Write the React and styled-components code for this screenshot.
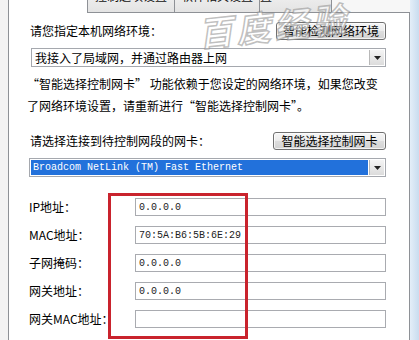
import styled, { createGlobalStyle } from 'styled-components';

const GlobalStyle = createGlobalStyle`
  html, body {
    margin: 0;
    padding: 0;
    background: #ffffff;
  }
  body {
    font-family: "Noto Sans CJK SC", "Liberation Sans", sans-serif;
    font-size: 12px;
    color: #000;
  }
`;

const CJK = '"Noto Sans CJK SC", "Liberation Sans", sans-serif';
const MONO = '"Liberation Mono", "Noto Sans CJK SC", monospace';

const tabs = [
  { label: '网络环境设置', width: 80, active: true },
  { label: '控制选项设置', width: 88 },
  { label: '软件相关设置', width: 86 },
  { label: '软件界面设置', width: 73 },
];

const fields = [
  { label: 'IP地址：', value: '0.0.0.0' },
  { label: 'MAC地址：', value: '70:5A:B6:5B:6E:29' },
  { label: '子网掩码：', value: '0.0.0.0' },
  { label: '网关地址：', value: '0.0.0.0' },
  { label: '网关MAC地址：', value: '' },
];

const Arrow = () => (
  <svg width="7" height="4" viewBox="0 0 7 4">
    <path d="M0 0h7L3.5 4z" fill="#222" />
  </svg>
);

const App = () => {
  return (
    <>
      <GlobalStyle />
      <Window>
        <LeftFrame />
        <Main>
          <TabBar>
            {tabs.map((t) => (
              <Tab key={t.label} $active={t.active} $width={t.width}>
                {t.label}
              </Tab>
            ))}
          </TabBar>
          <Content>
            <Row>
              <Label>请您指定本机网络环境：</Label>
              <Button $width={110}>智能检测网络环境</Button>
            </Row>
            <Combo $left={2}>
              <ComboText>我接入了局域网，并通过路由器上网</ComboText>
              <DropButton>
                <Arrow />
              </DropButton>
            </Combo>
            <Paragraph>
              “智能选择控制网卡” 功能依赖于您设定的网络环境，如果您改变
              <br />
              了网络环境设置，请重新进行“智能选择控制网卡”。
            </Paragraph>
            <Row $top={15}>
              <Label>请选择连接到待控制网段的网卡：</Label>
              <Button $width={113}>智能选择控制网卡</Button>
            </Row>
            <Combo>
              <ComboText $selected>Broadcom NetLink (TM) Fast Ethernet</ComboText>
              <DropButton>
                <Arrow />
              </DropButton>
            </Combo>
            <Fields>
              {fields.map((f) => (
                <FieldRow key={f.label}>
                  <FieldLabel>{f.label}</FieldLabel>
                  <Input>{f.value}</Input>
                </FieldRow>
              ))}
            </Fields>
          </Content>
        </Main>
        <RightFrame />
        <Highlight />
        <Watermark>百度经验</Watermark>
      </Window>
    </>
  );
};

const Window = styled.div`
  position: relative;
  width: 419px;
  height: 340px;
  overflow: hidden;
  display: flex;
  background: #f4f4f4;
`;

const LeftFrame = styled.div`
  width: 8px;
  background: #f3f3f3;
`;

const RightFrame = styled.div`
  width: 9px;
  background: linear-gradient(90deg, #e4eef8, #c9dcef);
`;

const Main = styled.div`
  flex: 1;
  display: flex;
  flex-direction: column;
  min-width: 0;
`;

const TabBar = styled.div`
  height: 13px;
  display: flex;
  align-items: flex-end;
  overflow: hidden;
  background: #f7f7f7;
`;

const Tab = styled.div`
  flex: none;
  width: ${({ $width }) => $width}px;
  height: ${({ $active }) => ($active ? 26 : 24)}px;
  box-sizing: border-box;
  padding-bottom: ${({ $active }) => ($active ? 14 : 10)}px;
  display: flex;
  align-items: flex-end;
  justify-content: center;
  font-family: ${CJK};
  font-size: 12px;
  line-height: 14px;
  color: #111;
  border: 1px solid #8e9196;
  border-bottom: none;
  margin-left: ${({ $active }) => ($active ? 0 : -1)}px;
  background: ${({ $active }) =>
    $active ? '#ffffff' : 'linear-gradient(#f2f2f2, #e3e3e3)'};
  box-shadow: ${({ $active }) => ($active ? 'none' : 'inset 0 -1px 0 #8e9196')};
  position: relative;
  z-index: ${({ $active }) => ($active ? 1 : 0)};
`;

const Content = styled.div`
  flex: 1;
  background: #ffffff;
  border-left: 1px solid #8e9196;
  border-right: 1px solid #8e9196;
  border-top: 1px solid #8e9196;
  margin-top: -1px;
  padding: 9px 23px 0 20px;
  display: flex;
  flex-direction: column;
`;

const Row = styled.div`
  height: 18px;
  margin-top: ${({ $top }) => $top || 0}px;
  display: flex;
  align-items: center;
  justify-content: space-between;
`;

const Label = styled.div`
  font-family: ${CJK};
  font-size: 12px;
  line-height: 18px;
  padding-left: 1px;
`;

const Button = styled.div`
  width: ${({ $width }) => $width}px;
  height: 18px;
  box-sizing: border-box;
  border: 1px solid #707070;
  border-radius: 3px;
  background: linear-gradient(#f6f6f6 0%, #ebebeb 50%, #dddddd 51%, #d2d2d2 100%);
  display: flex;
  align-items: center;
  justify-content: center;
  font-family: ${CJK};
  font-size: 12px;
  line-height: 14px;
  box-shadow: inset 0 0 0 1px rgba(255, 255, 255, 0.7);
`;

const Combo = styled.div`
  margin-top: 8px;
  margin-left: ${({ $left }) => $left || 0}px;
  height: 19px;
  box-sizing: border-box;
  border: 1px solid #a5a8ae;
  background: #fff;
  display: flex;
  align-items: stretch;
  padding: 1px;
`;

const ComboText = styled.div`
  flex: 1;
  display: flex;
  align-items: center;
  padding-left: 2px;
  font-family: ${({ $selected }) => ($selected ? MONO : CJK)};
  font-size: ${({ $selected }) => ($selected ? 10 : 12)}px;
  background: ${({ $selected }) => ($selected ? '#2271db' : 'transparent')};
  color: ${({ $selected }) => ($selected ? '#ffffff' : '#000')};
  white-space: nowrap;
  overflow: hidden;
`;

const DropButton = styled.div`
  width: 14px;
  margin-left: 1px;
  display: flex;
  align-items: center;
  justify-content: center;
  border-left: 1px solid #b8b8b8;
  background: linear-gradient(#f4f4f4, #dcdcdc);
`;

const Paragraph = styled.p`
  margin: 6px 0 0 -2px;
  font-family: ${CJK};
  font-size: 12px;
  line-height: 22px;
`;

const Fields = styled.div`
  margin-top: 21px;
  display: flex;
  flex-direction: column;
  gap: 10px;
`;

const FieldRow = styled.div`
  display: flex;
  align-items: center;
  height: 18px;
`;

const FieldLabel = styled.div`
  width: 106px;
  flex: none;
  font-family: ${CJK};
  font-size: 12px;
  line-height: 18px;
`;

const Input = styled.div`
  flex: 1;
  height: 18px;
  box-sizing: border-box;
  border: 1px solid #a9abb0;
  background: #fff;
  padding-left: 3px;
  display: flex;
  align-items: center;
  font-family: ${MONO};
  font-size: 10px;
  color: #222;
`;

const Highlight = styled.div`
  position: absolute;
  left: 108px;
  top: 193px;
  width: 140px;
  height: 146px;
  box-sizing: border-box;
  border: 3px solid #c9232d;
  pointer-events: none;
`;

const Watermark = styled.div`
  position: absolute;
  left: 198px;
  top: 0px;
  font-family: ${CJK};
  font-size: 34px;
  font-weight: 700;
  font-style: italic;
  letter-spacing: 4px;
  color: rgba(255, 255, 255, 0.55);
  -webkit-text-stroke: 1.5px rgba(130, 130, 130, 0.5);
  transform: rotate(-6deg);
  pointer-events: none;
`;

export default App;
